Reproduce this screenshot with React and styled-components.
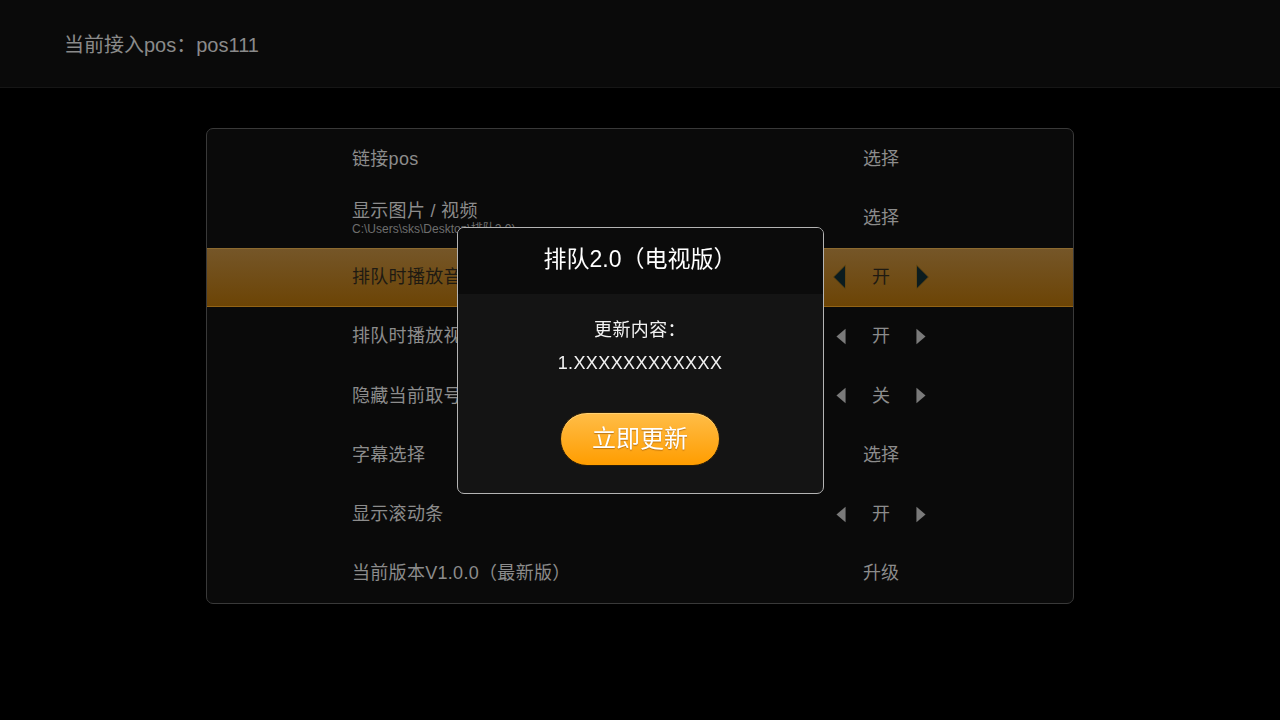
import React from "react";
import styled, { createGlobalStyle } from "styled-components";

const GlobalStyle = createGlobalStyle`
  html, body {
    margin: 0;
    padding: 0;
    background: #000;
    font-family: "Liberation Sans", "Noto Sans CJK SC", sans-serif;
  }
`;

const Page = styled.div`
  width: 1280px;
  height: 720px;
  background: #000;
  overflow: hidden;
`;

const Header = styled.header`
  height: 87px;
  background: #0a0a0a;
  border-bottom: 1px solid #161616;
  display: flex;
  align-items: center;
  padding-left: 64px;
  color: #8a8a8a;
  font-size: 20px;
`;

const Panel = styled.div`
  width: 866px;
  margin: 40px auto 0;
  background: #0a0a0a;
  border: 1px solid #393939;
  border-radius: 7px;
  overflow: hidden;
`;

const Row = styled.div`
  height: 59.25px;
  box-sizing: border-box;
  display: flex;
  align-items: center;
  padding-left: 145px;
  padding-right: 137px;
  color: ${(p) => (p.$active ? "#1e1a12" : "#8c8c8c")};
  background: ${(p) =>
    p.$active ? "linear-gradient(#755628, #6c4405)" : "transparent"};
  border-top: 1px solid ${(p) => (p.$active ? "#8c6a30" : "transparent")};
  border-bottom: 1px solid ${(p) => (p.$active ? "#936416" : "transparent")};
`;

const Label = styled.div`
  flex: 1;
  font-size: 18px;
  line-height: 22px;
  letter-spacing: 0.3px;
  display: flex;
  flex-direction: column;
`;

const Sub = styled.span`
  font-size: 12px;
  line-height: 14px;
  letter-spacing: 0;
  color: #6e6e6e;
`;

const Value = styled.div`
  width: 110px;
  display: flex;
  justify-content: center;
  align-items: center;
  gap: 26px;
  font-size: 18px;
  line-height: 22px;
`;

const Arrow = ({ dir, active }) => {
  const w = active ? 13 : 10;
  const h = active ? 26 : 17;
  const pts = dir === "left" ? `${w},0 ${w},${h} 0,${h / 2}` : `0,0 0,${h} ${w},${h / 2}`;
  return (
    <svg width={w} height={h} viewBox={`-0.5 -0.5 ${w + 1} ${h + 1}`}>
      <polygon
        points={pts}
        fill={active ? "#0b1c1f" : "#7a7a7a"}
        stroke={active ? "#6a4a10" : "none"}
        strokeWidth="1"
      />
    </svg>
  );
};

const Overlay = styled.div`
  position: fixed;
  inset: 0;
  display: flex;
  align-items: center;
  justify-content: center;
`;

const Dialog = styled.div`
  width: 365px;
  height: 265px;
  border: 1px solid #b4b4b4;
  border-radius: 7px;
  background: #141414;
  overflow: hidden;
  display: flex;
  flex-direction: column;
`;

const DialogTitle = styled.div`
  height: 66px;
  background: #0b0b0b;
  display: flex;
  align-items: center;
  justify-content: center;
  color: #fff;
  font-size: 23px;
  line-height: 26px;
  padding-bottom: 3px;
  box-sizing: border-box;
`;

const DialogBody = styled.div`
  flex: 1;
  display: flex;
  flex-direction: column;
  align-items: center;
  color: #f2f2f2;
  font-size: 18px;
  letter-spacing: 0.4px;
  padding-top: 20px;
`;

const Line = styled.div`
  line-height: 33px;
`;

const UpdateButton = styled.button`
  margin-top: 32px;
  width: 160px;
  height: 54px;
  border-radius: 27px;
  border: 1px solid #2a1d08;
  background: linear-gradient(#ffbd48, #ff9d00);
  color: #fff;
  font-family: inherit;
  font-size: 24px;
  line-height: 26px;
  text-shadow: 0 1px 1px rgba(120, 60, 0, 0.5);
  box-shadow: inset 0 1px 0 rgba(255, 230, 160, 0.5);
`;

const rows = [
  { label: "链接pos", value: "选择" },
  { label: "显示图片 / 视频", sub: "C:\\Users\\sks\\Desktop\\排队2.0)", value: "选择" },
  { label: "排队时播放音乐", value: "开", toggle: true, active: true },
  { label: "排队时播放视频", value: "开", toggle: true },
  { label: "隐藏当前取号", value: "关", toggle: true },
  { label: "字幕选择", value: "选择" },
  { label: "显示滚动条", value: "开", toggle: true },
  { label: "当前版本V1.0.0（最新版）", value: "升级" },
];

export default function App() {
  return (
    <Page>
      <GlobalStyle />
      <Header>当前接入pos：pos111</Header>
      <Panel>
        {rows.map((r) => (
          <Row key={r.label} $active={r.active}>
            <Label>
              <span>{r.label}</span>
              {r.sub && <Sub>{r.sub}</Sub>}
            </Label>
            <Value>
              {r.toggle && <Arrow dir="left" active={r.active} />}
              <span>{r.value}</span>
              {r.toggle && <Arrow dir="right" active={r.active} />}
            </Value>
          </Row>
        ))}
      </Panel>
      <Overlay>
        <Dialog>
          <DialogTitle>排队2.0（电视版）</DialogTitle>
          <DialogBody>
            <Line>更新内容：</Line>
            <Line>1.XXXXXXXXXXXX</Line>
            <UpdateButton>立即更新</UpdateButton>
          </DialogBody>
        </Dialog>
      </Overlay>
    </Page>
  );
}
